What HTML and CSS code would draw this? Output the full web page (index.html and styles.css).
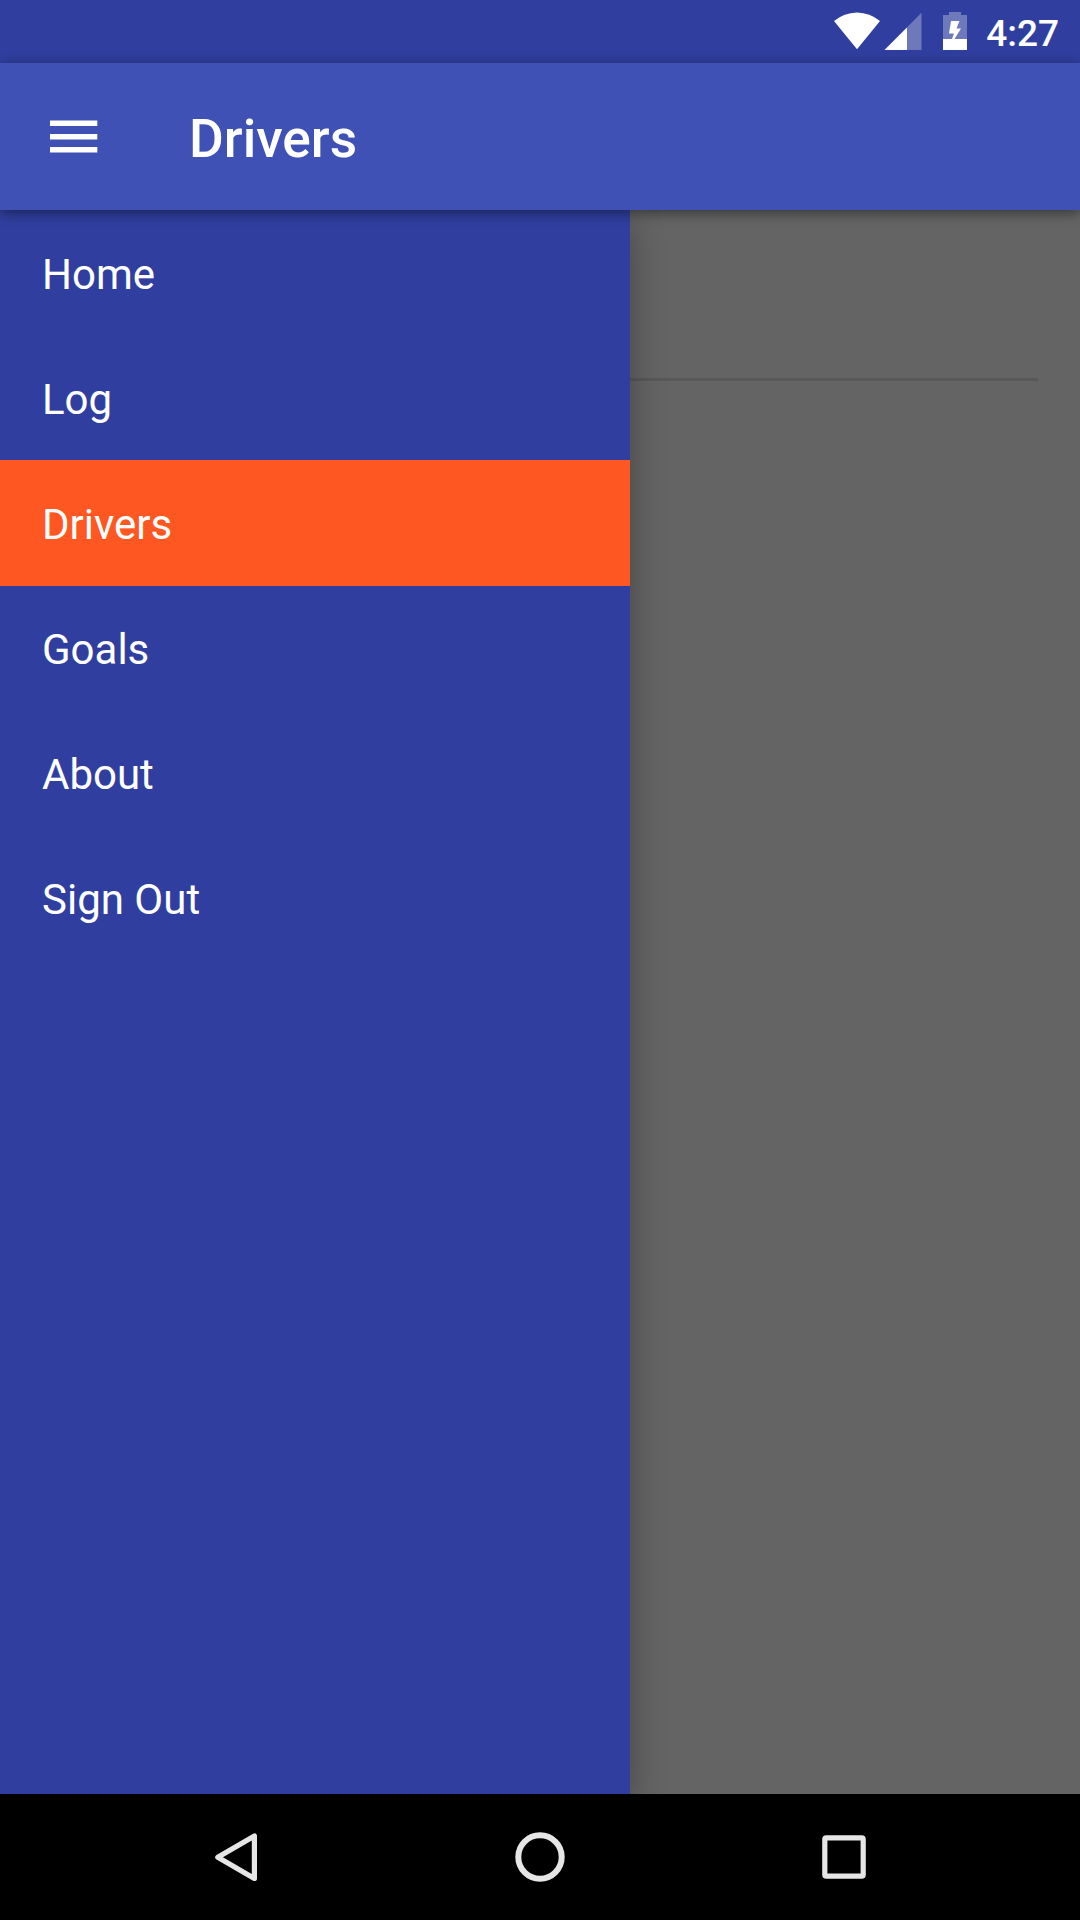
FILE: index.html
```html
<!DOCTYPE html>
<html lang="en">
<head>
<meta charset="utf-8">
<title>Drivers</title>
<link rel="stylesheet" href="styles.css">
</head>
<body>
<div class="screen">
  <div class="status-bar">
    <svg class="wifi" width="48" height="63" viewBox="0 0 48 63"><path d="M1 21Q11 13 24 12.600Q37 13 47 21L24 49.300Z" fill="#fff"/></svg>
    <svg class="signal" width="38" height="63" viewBox="0 0 38 63"><path d="M37.500 12.700V50H0.500Z" fill="#fff" fill-opacity=".3"/><path d="M23 27.500V50H0.500Z" fill="#fff"/></svg>
    <svg class="battery" width="24" height="63" viewBox="0 0 24 63"><path d="M0 15H6V12H18V15H24V39H0Z" fill="#fff" fill-opacity=".3"/><path d="M0 39H9L11 33.500H6L8 21H16.500L13.500 28.500H18L11.500 39H24V50H0Z" fill="#fff"/></svg>
    <span class="clock">4:27</span>
  </div>
  <header class="app-bar">
    <svg class="menu-icon" width="48" height="33" viewBox="0 0 48 33"><path d="M0 .5H47.300V6H0ZM0 14H47.300V19.400H0ZM0 27H47.300V32.400H0Z" fill="#fff"/></svg>
    <h1 class="title">Drivers</h1>
  </header>
  <div class="body">
    <nav class="drawer">
      <a class="item">Home</a>
      <a class="item">Log</a>
      <a class="item active">Drivers</a>
      <a class="item">Goals</a>
      <a class="item">About</a>
      <a class="item">Sign Out</a>
    </nav>
    <main class="content"><div class="divider"></div></main>
  </div>
  <div class="nav-bar">
    <svg width="56" height="56" viewBox="0 0 56 56"><path d="M9.800 28.300L46.400 6.900V49.500Z" fill="none" stroke="#e6e6e6" stroke-width="5.200" stroke-linejoin="round"/></svg>
    <svg width="56" height="56" viewBox="0 0 56 56"><circle cx="28" cy="28" r="21.700" fill="none" stroke="#e6e6e6" stroke-width="6"/></svg>
    <svg width="56" height="56" viewBox="0 0 56 56"><rect x="8.800" y="8.800" width="38.400" height="38.400" rx="1.500" fill="none" stroke="#e6e6e6" stroke-width="5.200"/></svg>
  </div>
</div>
</body>
</html>
```
FILE: styles.css
```css
body {
  margin: 0;
}

.screen {
  display: flex;
  flex-direction: column;
  width: 1080px;
  height: 1920px;
  overflow: hidden;
  font-family: Roboto, sans-serif;
  color: #fff;
}

.status-bar {
  display: flex;
  justify-content: flex-end;
  height: 63px;
  padding-right: 21px;
  box-sizing: border-box;
  background: #303f9f;
}

.signal {
  margin-left: 3px;
}

.battery {
  margin-left: 21px;
}

.clock {
  margin-left: 19px;
  font-size: 37px;
  font-weight: 500;
  line-height: 67px;
}

.app-bar {
  display: flex;
  align-items: center;
  height: 147px;
  padding-left: 50px;
  box-sizing: border-box;
  position: relative;
  z-index: 2;
  background: #3f51b5;
  box-shadow: 0 3px 12px rgba(0, 0, 0, .45);
}

.title {
  margin: 4px 0 0 91px;
  font-size: 53.300px;
  font-weight: 500;
  line-height: 64px;
}

.body {
  display: flex;
  flex: 1;
  background: #646464;
}

.drawer {
  width: 630px;
  position: relative;
  z-index: 1;
  background: #303f9f;
  box-shadow: 0 12px 32px rgba(0, 0, 0, .3);
}

.item {
  display: block;
  height: 125px;
  padding-left: 42px;
  font-size: 42px;
  line-height: 129px;
}

.active {
  background: #ff5722;
  box-shadow: 0 1px #ff5722;
}

.content {
  flex: 1;
  padding: 168px 42px 0 0;
}

.divider {
  height: 3px;
  background: #585858;
}

.nav-bar {
  display: grid;
  grid-template-columns: repeat(3, 1fr);
  place-items: center;
  height: 126px;
  padding: 0 84px;
  box-sizing: border-box;
  position: relative;
  z-index: 2;
  background: #000;
}
```
